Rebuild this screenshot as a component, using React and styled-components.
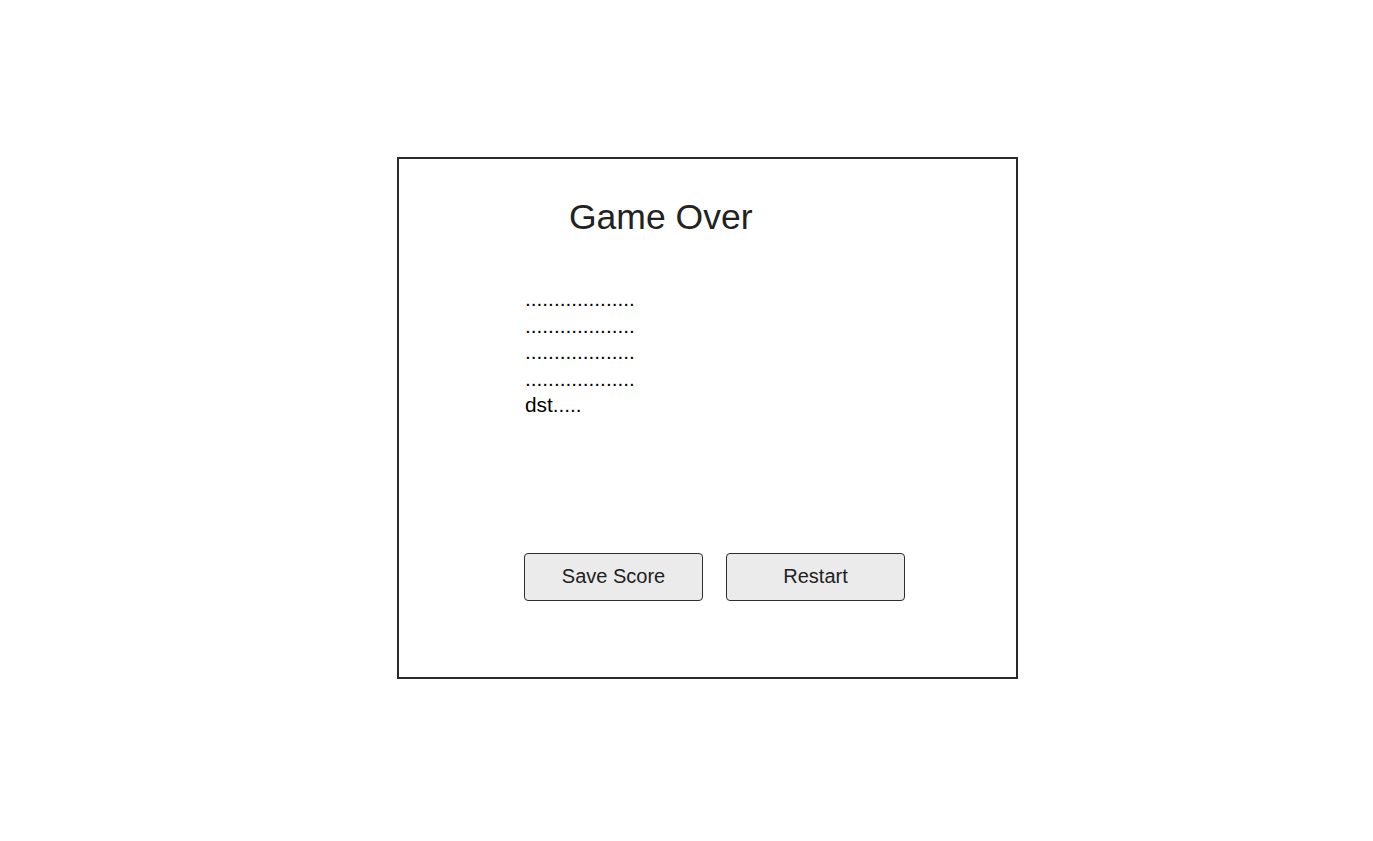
import styled, { createGlobalStyle } from 'styled-components'

const GlobalStyle = createGlobalStyle`
  html, body {
    margin: 0;
    padding: 0;
    background: #ffffff;
  }
  body {
    font-family: 'Liberation Sans', Arial, sans-serif;
    color: #222222;
  }
`

const Page = styled.main`
  padding: 157px 0 0 397px;
`

const Frame = styled.section`
  box-sizing: border-box;
  width: 621px;
  height: 522px;
  border: 2px solid #2a2a2a;
  padding: 36px 0 0 125px;
  display: flex;
  flex-direction: column;
`

const Title = styled.h1`
  margin: 0 0 0 45px;
  font-size: 35.5px;
  font-weight: 400;
  line-height: 44px;
  color: #222222;
`

const Scores = styled.ul`
  list-style: none;
  margin: 47px 0 0 1px;
  padding: 0;
  font-size: 20.8px;
  line-height: 26.5px;
  color: #000000;
`

const Actions = styled.div`
  display: flex;
  gap: 23px;
  margin-top: 134px;
`

const Button = styled.button`
  box-sizing: border-box;
  width: 179px;
  height: 48px;
  border: 1.5px solid #2e2e2e;
  border-radius: 4px;
  background: #ebebeb;
  color: #222222;
  font-family: 'Liberation Sans', Arial, sans-serif;
  font-size: 20px;
  cursor: pointer;
`

const rows = [
  '...................',
  '...................',
  '...................',
  '...................',
  'dst.....',
]

const App = () => {
  return (
    <>
      <GlobalStyle />
      <Page>
        <Frame>
          <Title>Game Over</Title>
          <Scores>
            {rows.map((row, i) => (
              <li key={i}>{row}</li>
            ))}
          </Scores>
          <Actions>
            <Button>Save Score</Button>
            <Button>Restart</Button>
          </Actions>
        </Frame>
      </Page>
    </>
  )
}

export default App
